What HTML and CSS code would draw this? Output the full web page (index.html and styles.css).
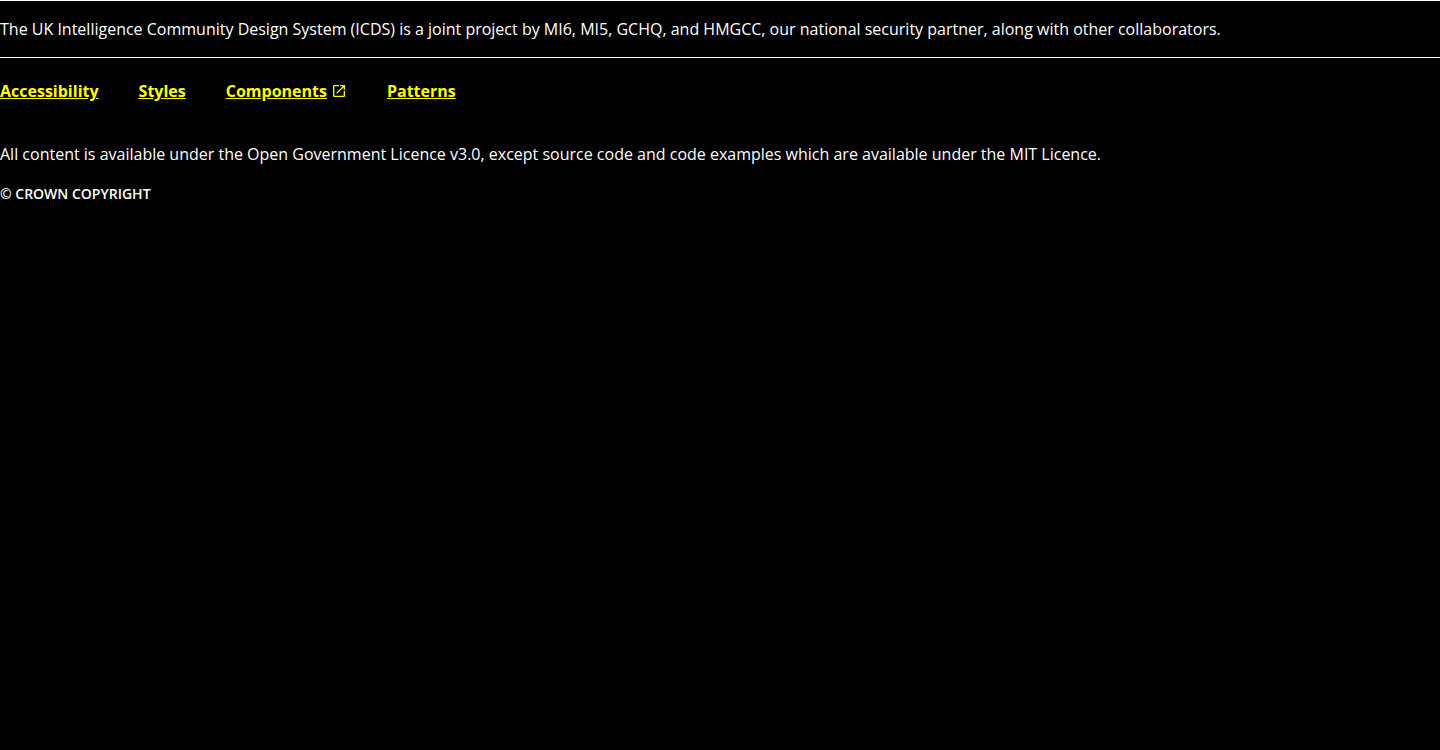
FILE: index.html
```html
<!DOCTYPE html>
<html lang="en">
<head>
<meta charset="utf-8">
<title>Footer</title>
<link rel="stylesheet" href="styles.css">
</head>
<body>
<footer class="footer">
  <p class="footer-description">The UK Intelligence Community Design System (ICDS) is a joint project by MI6, MI5, GCHQ, and HMGCC, our national security partner, along with other collaborators.</p>
  <nav class="footer-links" aria-label="Footer">
    <a class="footer-link" href="#accessibility">Accessibility</a>
    <a class="footer-link" href="#styles">Styles</a>
    <a class="footer-link" href="#components">Components<svg class="external-icon" viewBox="0 0 24 24" aria-hidden="true"><path d="M19 19H5V5h7V3H5a2 2 0 0 0-2 2v14a2 2 0 0 0 2 2h14c1.1 0 2-.9 2-2v-7h-2v7zM14 3v2h3.59l-9.83 9.83 1.41 1.41L19 6.41V10h2V3h-7z"/></svg></a>
    <a class="footer-link" href="#patterns">Patterns</a>
  </nav>
  <div class="footer-legal">
    <p class="footer-licence">All content is available under the Open Government Licence v3.0, except source code and code examples which are available under the MIT Licence.</p>
    <p class="footer-copyright">© CROWN COPYRIGHT</p>
  </div>
</footer>
</body>
</html>
```
FILE: styles.css
```css
body {
  margin: 0;
  background: #000;
  color: #fff;
  font-family: "Open Sans", sans-serif;
  font-size: 16px;
  line-height: 24px;
}

p {
  margin: 0;
}

.footer {
  border-top: 1px solid #fff;
}

.footer-description {
  padding: 16px 0;
  border-bottom: 1px solid #fff;
}

.footer-links {
  display: flex;
  flex-wrap: wrap;
  gap: 16px 40px;
  padding: 21px 0;
}

.footer-link {
  display: inline-flex;
  align-items: center;
  gap: 4px;
  color: #ff0;
  font-weight: 700;
}

.external-icon {
  width: 16px;
  height: 16px;
  fill: currentColor;
}

.footer-legal {
  display: flex;
  flex-direction: column;
  gap: 16px;
  padding: 18px 0;
}

.footer-copyright {
  font-size: 14px;
  font-weight: 600;
}
```
